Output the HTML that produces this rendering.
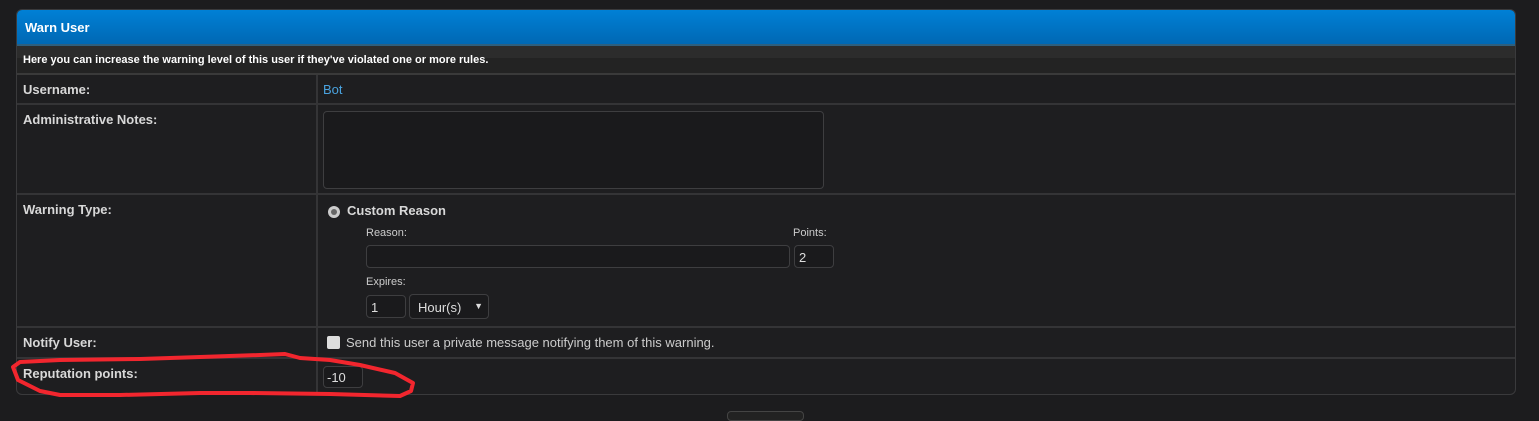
<!DOCTYPE html>
<html><head><meta charset="utf-8"><style>
*{box-sizing:border-box;margin:0;padding:0}
body{width:1539px;height:415px;background:#1c1c1e;font-family:"Liberation Sans",sans-serif;color:#ddd;position:relative;overflow:hidden}
.box{position:absolute;left:16px;top:9px;width:1500px;height:386px;border:1px solid #3a3a3c;border-radius:6px;background:#1e1e20;overflow:hidden}
.hd{position:absolute;left:0;top:0;right:0;height:36px;background:linear-gradient(#0080d6,#0068b4);border-bottom:2px solid #2e5f7e;color:#fff;font-weight:bold;font-size:13px;padding:10px 8px}
.sub{position:absolute;left:0;top:36px;right:0;height:29px;background:linear-gradient(#2c2c2c 0,#2c2c2c 45%,#232323 45%);color:#fff;font-weight:bold;font-size:11px;padding:8px 6px;border-bottom:2px solid #3a3a3a}
.row{position:absolute;left:0;right:0;border-bottom:2px solid #343436}
.l{position:absolute;left:6px;top:7px;font-weight:bold;font-size:13px;color:#d8d8d8}
.div{position:absolute;left:299px;top:65px;width:2px;height:320px;background:#343436}
.in{position:absolute;border:1px solid #3e3e40;border-radius:4px;background:#1a1a1c;font-size:13px;color:#ddd;padding:4px 4px}
.t{position:absolute;font-size:11px;color:#ccc}
</style></head><body>
<div class="box">
<div class="hd">Warn User</div>
<div class="sub">Here you can increase the warning level of this user if they've violated one or more rules.</div>
<div class="row" style="top:65px;height:30px"><div class="l">Username:</div><div style="position:absolute;left:306px;top:7px;font-size:13px;color:#4aa3df">Bot</div></div>
<div class="row" style="top:95px;height:90px"><div class="l">Administrative Notes:</div></div>
<div class="in" style="left:306px;top:101px;width:501px;height:78px"></div>
<div class="row" style="top:185px;height:133px"><div class="l">Warning Type:</div></div>
<div style="position:absolute;left:311px;top:196px;width:12px;height:12px;border-radius:50%;background:#ccc"><div style="position:absolute;left:3px;top:3px;width:6px;height:6px;border-radius:50%;background:#666"></div></div>
<div style="position:absolute;left:330px;top:193px;font-weight:bold;font-size:13px;color:#d8d8d8">Custom Reason</div>
<div class="t" style="left:349px;top:217px">Reason:</div>
<div class="t" style="left:776px;top:217px">Points:</div>
<div class="in" style="left:349px;top:235px;width:424px;height:23px"></div>
<div class="in" style="left:777px;top:235px;width:40px;height:23px">2</div>
<div class="t" style="left:349px;top:266px">Expires:</div>
<div class="in" style="left:349px;top:285px;width:40px;height:23px">1</div>
<div class="in" style="left:392px;top:284px;width:80px;height:25px;padding:5px 8px">Hour(s)<span style="position:absolute;right:5px;top:6px;font-size:9px">▼</span></div>
<div class="row" style="top:318px;height:31px"><div class="l">Notify User:</div></div>
<div style="position:absolute;left:310px;top:326px;width:13px;height:13px;border-radius:2px;background:#ddd"></div>
<div style="position:absolute;left:329px;top:325px;font-size:13px;color:#ccc">Send this user a private message notifying them of this warning.</div>
<div class="row" style="top:349px;height:37px;border:0"><div class="l">Reputation points:</div></div>
<div class="in" style="left:306px;top:356px;width:40px;height:22px;padding:3px 3px">-10</div>
<div class="div"></div>
</div>
<div style="position:absolute;left:727px;top:411px;width:77px;height:10px;border:1px solid #444;border-radius:4px;background:#222"></div>
<svg width="1539" height="415" style="position:absolute;left:0;top:0">
<path d="M20,362 L60,360 L140,359 L200,357 L260,355 L285,354 L300,358 L330,360 L360,365 L395,373 L413,383 L411,391 L400,396 L330,394 L250,393 L200,393 L120,395 L60,395 L40,391 L18,380 L13,367 Z" fill="none" stroke="#f2262e" stroke-width="4" stroke-linejoin="round"/>
</svg>
</body></html>
